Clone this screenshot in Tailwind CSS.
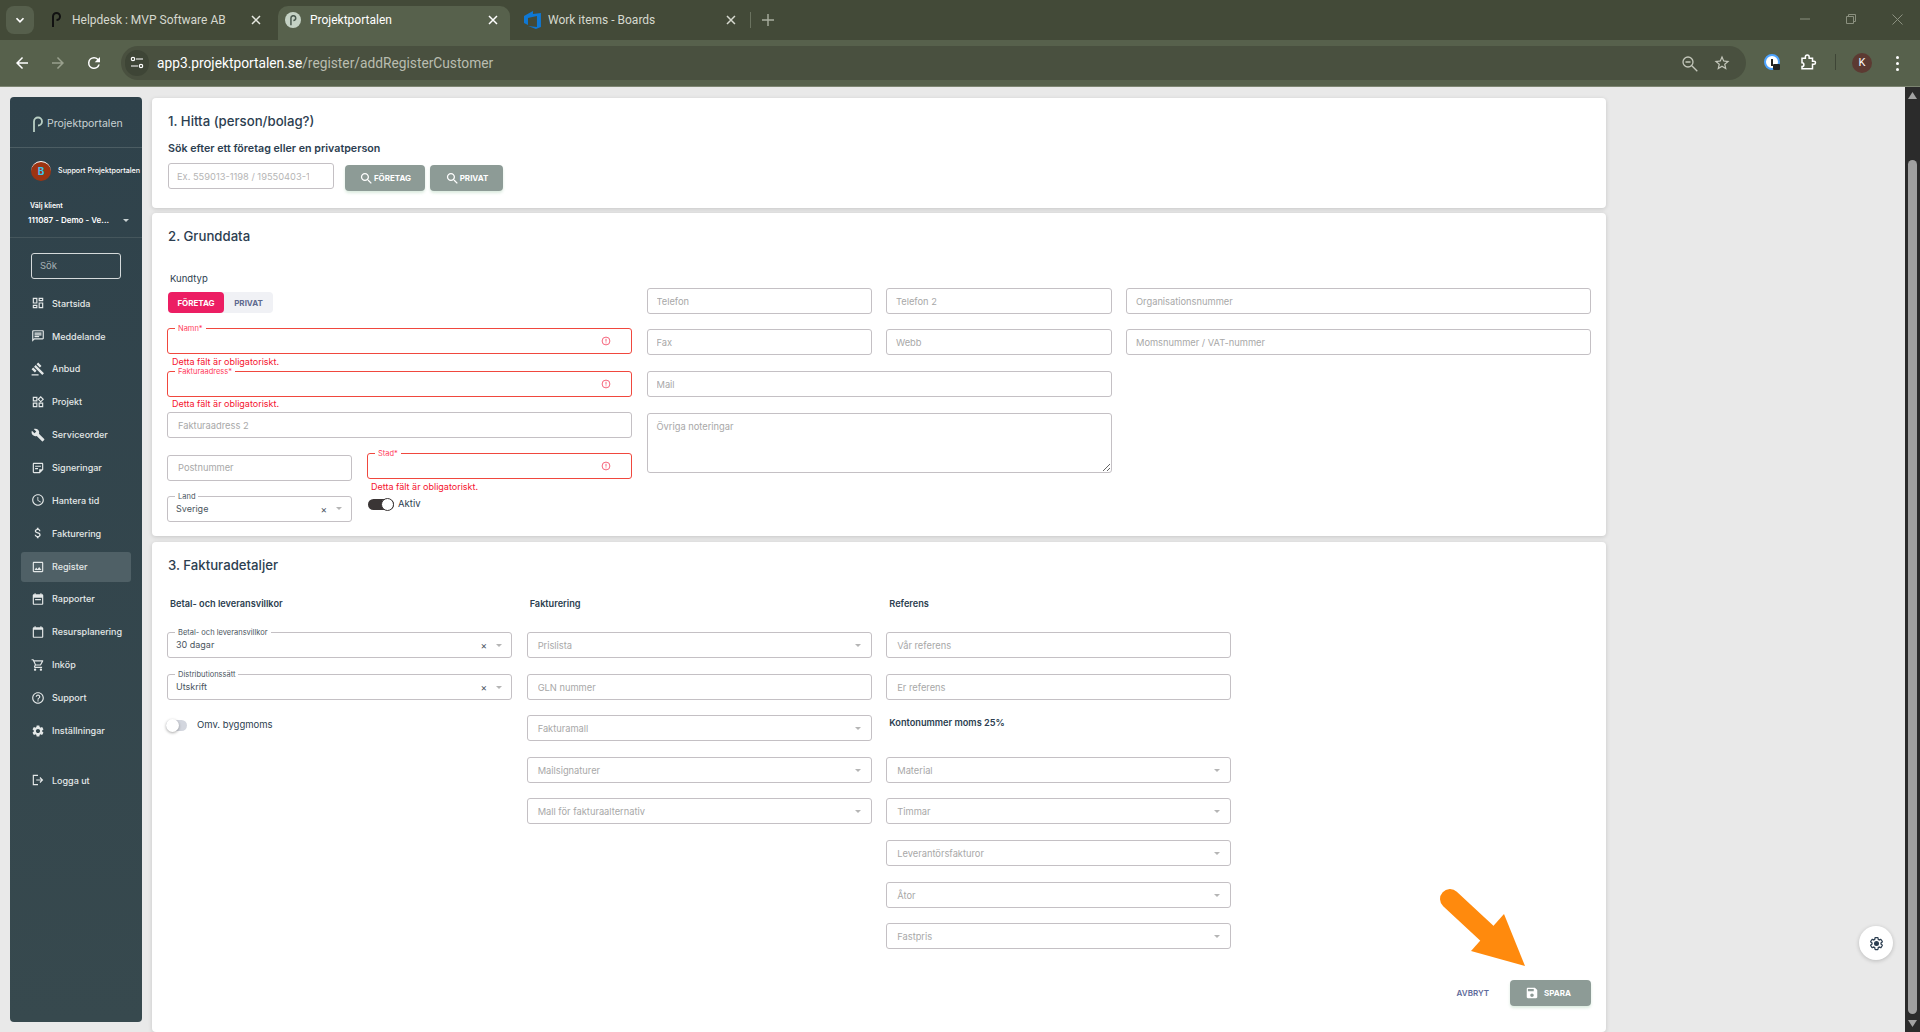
<!DOCTYPE html>
<html lang="sv">
<head>
<meta charset="UTF-8">
<title>Projektportalen</title>
<script src="https://cdn.jsdelivr.net/npm/@tailwindcss/browser@4"></script>
</head>
<body class="relative h-[1032px] overflow-hidden bg-[#e9e9e9] font-[Inter,sans-serif] text-[#2c3e50]">

<!-- Browser chrome -->
<header class="font-[Roboto,sans-serif]">
  <div class="flex h-10 items-end bg-[#434a38] text-[#d6d9cf]">
    <div class="mb-[6px] ml-[6px] flex h-[28px] w-[28px] items-center justify-center rounded-lg bg-[#565f4c]">
      <svg class="h-[14px] w-[14px]" viewBox="0 0 24 24" fill="none" stroke="#fff" stroke-width="3"><path d="M6 9l6 6 6-6"/></svg>
    </div>
    <div class="ml-[2px] flex h-[34px] w-[242px] items-center pb-[6px] pl-[15px]">
      <svg class="h-[16px] w-[10px]" viewBox="0 0 10 16" fill="none" stroke="#111" stroke-width="2"><path d="M2 15V4.500a3.500 3.500 0 1 1 3.500 3.500"/></svg>
      <span class="ml-[11px] w-[174px] whitespace-nowrap text-[12px]">Helpdesk : MVP Software AB</span>
      <svg class="ml-[5px] h-[10px] w-[10px]" viewBox="0 0 10 10" stroke="#e6e8e0" stroke-width="1.500"><path d="M1 1l8 8M9 1L1 9"/></svg>
    </div>
    <div class="flex h-[34px] w-[232px] items-center rounded-t-[10px] bg-[#57614c] pb-[6px] pl-[7px] text-white">
      <div class="flex h-4 w-4 items-center justify-center rounded-full bg-[#c5d2c5]">
        <svg class="h-[11px] w-[8px]" viewBox="0 0 10 16" fill="none" stroke="#4b5a50" stroke-width="2.200"><path d="M2 15V4.500a3.500 3.500 0 1 1 3.500 3.500"/></svg>
      </div>
      <span class="ml-[9px] w-[173px] text-[12px]">Projektportalen</span>
      <svg class="ml-[5px] h-[10px] w-[10px]" viewBox="0 0 10 10" stroke="#fff" stroke-width="1.500"><path d="M1 1l8 8M9 1L1 9"/></svg>
    </div>
    <div class="flex h-[34px] w-[241px] items-center pb-[6px] pl-[14px]">
      <svg class="h-[18px] w-[17px]" viewBox="0 0 17 18" fill="#0f78d4"><path d="M0 5l9-5 0 3 8-1v14l-5 2-8-3 9 1V5L4 7v7l-4-2z"/></svg>
      <span class="ml-[7px] w-[179px] text-[12px]">Work items - Boards</span>
      <svg class="h-[10px] w-[10px]" viewBox="0 0 10 10" stroke="#d6d9cf" stroke-width="1.500"><path d="M1 1l8 8M9 1L1 9"/></svg>
      <span class="ml-[14px] h-[16px] w-px bg-[#6b7360]"></span>
    </div>
    <svg class="mb-[14px] ml-[11px] h-3 w-3" viewBox="0 0 12 12" stroke="#a9ae9f" stroke-width="1.400"><path d="M6 0v12M0 6h12"/></svg>
    <div class="mb-[15px] ml-auto flex items-center gap-[36px] pr-[17px]">
      <svg class="h-[12px] w-[10px]" viewBox="0 0 10 12" stroke="#8b907f"><path d="M0 6h10"/></svg>
      <svg class="h-[10px] w-[10px]" viewBox="0 0 10 10" fill="none" stroke="#8b907f"><path d="M.5 2.500h7v7h-7zM2.500 2.500v-2h7v7h-2"/></svg>
      <svg class="h-[11px] w-[11px]" viewBox="0 0 11 11" stroke="#8b907f"><path d="M.5.500l10 10M10.500.500l-10 10"/></svg>
    </div>
  </div>
  <div class="flex h-[47px] items-start border-b border-[#7d8572] bg-[#57614c] pt-[6px]">
    <div class="flex h-[34px] w-[121px] items-center">
      <svg class="ml-[13px] h-[18px] w-[18px]" viewBox="0 0 24 24" fill="#fff"><path d="M20 11H7.830l5.590-5.590L12 4l-8 8 8 8 1.410-1.410L7.830 13H20z"/></svg>
      <svg class="ml-[18px] h-[18px] w-[18px]" viewBox="0 0 24 24" fill="#99a08d"><path d="M4 11h12.170l-5.590-5.590L12 4l8 8-8 8-1.410-1.410L16.170 13H4z"/></svg>
      <svg class="ml-[18px] h-[18px] w-[18px]" viewBox="0 0 24 24" fill="#fff"><path d="M17.650 6.350A7.960 7.960 0 0 0 12 4a8 8 0 1 0 7.730 10h-2.080A6 6 0 1 1 12 6c1.660 0 3.140.69 4.220 1.780L13 11h7V4z"/></svg>
    </div>
    <div class="flex h-[34px] w-[1625px] items-center rounded-full bg-[#49503f] pl-[4px]">
      <div class="flex h-[26px] w-[24px] items-center justify-center rounded-full bg-[#3e4536]">
        <svg class="h-[16px] w-[14px]" viewBox="0 0 14 16" fill="none" stroke="#fff" stroke-width="1.200"><circle cx="3" cy="4" r="1.700"/><path d="M6 4h7M1 11h7"/><circle cx="11" cy="11" r="1.700"/></svg>
      </div>
      <p class="ml-[8px] pt-px text-[13.750px] text-white">app3.projektportalen.se<span class="text-[#b9bdb0]">/register/addRegisterCustomer</span></p>
      <svg class="ml-auto h-[17px] w-[17px]" viewBox="0 0 17 17" fill="none" stroke="#c4c7bb" stroke-width="1.300"><circle cx="7" cy="7" r="5"/><path d="M4.500 7h5M10.800 10.800l5.500 5.500"/></svg>
      <svg class="ml-[15px] mr-[15px] h-[18px] w-[18px]" viewBox="0 0 24 24" fill="#c4c7bb"><path d="M22 9.240l-7.190-.620L12 2 9.190 8.630 2 9.240l5.460 4.730L5.820 21 12 17.270 18.180 21l-1.630-7.030L22 9.240zM12 15.400l-3.760 2.270 1-4.280-3.320-2.880 4.380-.38L12 6.100l1.710 4.040 4.380.38-3.320 2.880 1 4.280L12 15.400z"/></svg>
    </div>
    <div class="relative ml-[18px] mt-[8px] flex h-[16px] w-[16px] items-center justify-center rounded-full border-2 border-[#4da3ff] bg-white">
      <span class="h-[7px] w-[2px] bg-[#222]"></span>
      <span class="absolute -bottom-[2px] -right-[2px] h-[6px] w-[7px] rounded-[1px] bg-[#222]"></span>
    </div>
    <svg class="ml-[19px] mt-[7px] h-[18px] w-[18px]" viewBox="0 0 24 24" fill="none" stroke="#fff" stroke-width="2"><path d="M4 7h4.500V5a2.500 2.500 0 0 1 5 0v2H18v4h2a2 2 0 0 1 0 4h-2v6H4v-3a2.500 2.500 0 0 0 0-5V7z"/></svg>
    <span class="ml-[18px] mt-[8px] h-[16px] w-px bg-[#3e4536]"></span>
    <span class="ml-[16px] mt-[7px] flex h-5 w-5 items-center justify-center rounded-full bg-[#5c3a32] text-[11px] text-white">K</span>
    <span class="ml-[24px] mt-[10px] flex flex-col gap-[3px]">
      <i class="h-[3px] w-[3px] rounded-full bg-white"></i><i class="h-[3px] w-[3px] rounded-full bg-white"></i><i class="h-[3px] w-[3px] rounded-full bg-white"></i>
    </span>
  </div>
</header>

<div class="flex h-[945px]">
  <!-- Sidebar -->
  <aside class="ml-[10px] mt-[10px] h-[925px] w-[132px] shrink-0 overflow-hidden rounded-[4px] bg-gradient-to-b from-[#2f424b] to-[#37494e] text-[#e4e8e8]">
    <div class="flex h-[51px] items-center border-b border-[#4c5d63] pl-[22px] pt-[4px]">
      <svg class="h-[17px] w-[12px]" viewBox="0 0 12 16" fill="none" stroke="#b9cfc4" stroke-width="1.800"><path d="M2 15.500V5a4 4 0 1 1 4 4"/></svg>
      <span class="ml-[3px] text-[10.500px] text-[#c9d2d3]">Projektportalen</span>
    </div>
    <div class="flex h-[46px] items-center pl-[21px]">
      <span class="flex h-5 w-5 shrink-0 items-center justify-center rounded-full border-t border-t-white bg-[#9c3412] text-[10px] font-bold text-[#3bc4ee]">B</span>
      <span class="ml-[7px] whitespace-nowrap text-[7.200px] font-medium text-white">Support Projektportalen</span>
    </div>
    <div class="h-[44px] border-b border-[#45565c] pl-[18px] pt-[6px]">
      <p class="pl-[2px] text-[7px] font-semibold leading-[12px] text-white">Välj klient</p>
      <div class="mt-px flex items-center pr-[13px]">
        <span class="text-[8px] font-semibold leading-[14px] text-white">111087 - Demo - Ve...</span>
        <svg class="ml-auto h-[3px] w-[6px]" viewBox="0 0 6 3" fill="#c9d2d3"><path d="M0 0h6L3 3z"/></svg>
      </div>
    </div>
    <div class="ml-[21px] mt-[15px] flex h-[26px] w-[90px] items-center rounded-[3px] border border-[#d5dadb] pl-[8px] text-[9.500px] text-[#a7b1b4]">Sök</div>

    <nav class="mt-[8px] flex flex-col text-[9px] font-medium">
      <a class="flex h-[32.850px] items-center pl-[21px]"><svg class="mr-[7px] h-[14px] w-[14px] shrink-0" viewBox="0 0 24 24" fill="currentColor"><path d="M19 5v2h-4V5h4M9 5v6H5V5h4m10 8v6h-4v-6h4M9 17v2H5v-2h4M21 3h-8v6h8V3zM11 3H3v10h8V3zm10 8h-8v10h8V11zm-10 4H3v6h8v-6z"/></svg>Startsida</a>
      <a class="flex h-[32.850px] items-center pl-[21px]"><svg class="mr-[7px] h-[14px] w-[14px] shrink-0" viewBox="0 0 24 24" fill="currentColor"><path d="M20 2H4c-1.100 0-2 .9-2 2v18l4-4h14c1.100 0 2-.9 2-2V4c0-1.100-.9-2-2-2zm0 14H5.170L4 17.170V4h16v12zM6 12h8v2H6zm0-3h12v2H6zm0-3h12v2H6z"/></svg>Meddelande</a>
      <a class="flex h-[32.850px] items-center pl-[21px]"><svg class="mr-[7px] h-[14px] w-[14px] shrink-0" viewBox="0 0 24 24" fill="currentColor"><path d="M1 21h12v2H1zM5.245 8.070l2.830-2.827 14.140 14.142-2.828 2.828zM12.317 1l5.657 5.656-2.830 2.830-5.654-5.660zM3.825 9.485l5.657 5.657-2.828 2.828-5.657-5.657z"/></svg>Anbud</a>
      <a class="flex h-[32.850px] items-center pl-[21px]"><svg class="mr-[7px] h-[14px] w-[14px] shrink-0" viewBox="0 0 24 24" fill="currentColor"><path d="M16.660 4.520l2.830 2.830-2.830 2.830-2.830-2.830 2.830-2.830M9 5v4H5V5h4m10 10v4h-4v-4h4M9 15v4H5v-4h4m7.660-13.310L11 7.340 16.660 13l5.660-5.660-5.660-5.650zM11 3H3v8h8V3zm10 10h-8v8h8v-8zm-10 0H3v8h8v-8z"/></svg>Projekt</a>
      <a class="flex h-[32.850px] items-center pl-[21px]"><svg class="mr-[7px] h-[14px] w-[14px] shrink-0" viewBox="0 0 24 24" fill="currentColor"><path d="M22.700 19l-9.100-9.100c.9-2.300.4-5-1.500-6.900-2-2-5-2.400-7.400-1.300L9 6 6 9 1.600 4.700C.4 7.100.9 10.100 2.900 12.100c1.900 1.900 4.600 2.400 6.900 1.500l9.100 9.100c.4.400 1 .4 1.400 0l2.300-2.300c.5-.4.5-1.100.1-1.400z"/></svg>Serviceorder</a>
      <a class="flex h-[32.850px] items-center pl-[21px]"><svg class="mr-[7px] h-[14px] w-[14px] shrink-0" viewBox="0 0 24 24" fill="currentColor"><path d="M19 5v9h-5v5H5V5h14m0-2H5c-1.100 0-2 .9-2 2v14c0 1.100.9 2 2 2h10l6-6V5c0-1.100-.9-2-2-2zm-7 11H7v-2h5v2zm5-4H7V8h10v2z"/></svg>Signeringar</a>
      <a class="flex h-[32.850px] items-center pl-[21px]"><svg class="mr-[7px] h-[14px] w-[14px] shrink-0" viewBox="0 0 24 24" fill="currentColor"><path d="M11.990 2C6.470 2 2 6.480 2 12s4.470 10 9.990 10C17.520 22 22 17.520 22 12S17.520 2 11.990 2zM12 20c-4.420 0-8-3.580-8-8s3.580-8 8-8 8 3.580 8 8-3.580 8-8 8zm.5-13H11v6l5.250 3.150.75-1.230-4.500-2.670z"/></svg>Hantera tid</a>
      <a class="flex h-[32.850px] items-center pl-[21px]"><svg class="mr-[7px] h-[14px] w-[14px] shrink-0" viewBox="0 0 24 24" fill="currentColor"><path d="M11.800 10.900c-2.270-.59-3-1.200-3-2.150 0-1.090 1.010-1.850 2.700-1.850 1.780 0 2.440.85 2.500 2.100h2.210c-.07-1.720-1.120-3.300-3.210-3.810V3h-3v2.160c-1.940.42-3.500 1.680-3.500 3.610 0 2.310 1.910 3.460 4.700 4.130 2.500.6 3 1.480 3 2.410 0 .69-.49 1.790-2.700 1.790-2.060 0-2.870-.92-2.980-2.100h-2.200c.12 2.190 1.760 3.420 3.680 3.830V21h3v-2.150c1.950-.37 3.500-1.500 3.500-3.550 0-2.840-2.430-3.810-4.700-4.400z"/></svg>Fakturering</a>
      <a class="mx-[11px] mb-[1px] mt-[2px] flex h-[30px] items-center rounded-[3px] bg-[#4f6066] pl-[10px]"><svg class="mr-[7px] h-[14px] w-[14px] shrink-0" viewBox="0 0 24 24" fill="currentColor"><path d="M19 3H5c-1.100 0-2 .9-2 2v14c0 1.100.9 2 2 2h14c1.100 0 2-.9 2-2V5c0-1.100-.9-2-2-2zm0 16H5V5h14v14zm-5-7l-3 3.720L9 13l-3 4h12l-4-5z"/></svg>Register</a>
      <a class="flex h-[32.850px] items-center pl-[21px]"><svg class="mr-[7px] h-[14px] w-[14px] shrink-0" viewBox="0 0 24 24" fill="currentColor"><path d="M19 4h-1V2h-2v2H8V2H6v2H5c-1.100 0-2 .9-2 2v14c0 1.100.9 2 2 2h14c1.100 0 2-.9 2-2V6c0-1.100-.9-2-2-2zm0 16H5V10h14v10zM7 12h10v2H7z"/></svg>Rapporter</a>
      <a class="flex h-[32.850px] items-center pl-[21px]"><svg class="mr-[7px] h-[14px] w-[14px] shrink-0" viewBox="0 0 24 24" fill="currentColor"><path d="M19 4h-1V2h-2v2H8V2H6v2H5c-1.100 0-2 .9-2 2v14c0 1.100.9 2 2 2h14c1.100 0 2-.9 2-2V6c0-1.100-.9-2-2-2zm0 16H5V8h14v12z"/></svg>Resursplanering</a>
      <a class="flex h-[32.850px] items-center pl-[21px]"><svg class="mr-[7px] h-[14px] w-[14px] shrink-0" viewBox="0 0 24 24" fill="currentColor"><path d="M15.550 13c.75 0 1.410-.41 1.750-1.030l3.580-6.490A.996.996 0 0020.010 4H5.210l-.94-2H1v2h2l3.600 7.590-1.350 2.440C4.520 15.370 5.480 17 7 17h12v-2H7l1.100-2h7.450zM6.160 6h12.150l-2.760 5H8.530L6.160 6zM7 18c-1.100 0-1.990.9-1.990 2S5.900 22 7 22s2-.9 2-2-.9-2-2-2zm10 0c-1.100 0-1.990.9-1.990 2s.89 2 1.990 2 2-.9 2-2-.9-2-2-2z"/></svg>Inköp</a>
      <a class="flex h-[32.850px] items-center pl-[21px]"><svg class="mr-[7px] h-[14px] w-[14px] shrink-0" viewBox="0 0 24 24" fill="currentColor"><path d="M11 18h2v-2h-2v2zm1-16C6.480 2 2 6.480 2 12s4.480 10 10 10 10-4.480 10-10S17.520 2 12 2zm0 18c-4.410 0-8-3.590-8-8s3.590-8 8-8 8 3.590 8 8-3.590 8-8 8zm0-14c-2.210 0-4 1.790-4 4h2c0-1.100.9-2 2-2s2 .9 2 2c0 2-3 1.750-3 5h2c0-2.250 3-2.500 3-5 0-2.210-1.790-4-4-4z"/></svg>Support</a>
      <a class="flex h-[32.850px] items-center pl-[21px]"><svg class="mr-[7px] h-[14px] w-[14px] shrink-0" viewBox="0 0 24 24" fill="currentColor"><path d="M19.140 12.940c.04-.3.06-.61.06-.94 0-.32-.02-.64-.07-.94l2.030-1.580c.18-.14.23-.41.12-.61l-1.920-3.320c-.12-.22-.37-.29-.59-.22l-2.390.96c-.5-.38-1.030-.7-1.620-.94l-.36-2.540c-.04-.24-.24-.41-.48-.41h-3.840c-.24 0-.43.17-.47.41l-.36 2.540c-.59.24-1.130.57-1.620.94l-2.390-.96c-.22-.08-.47 0-.59.22L2.740 8.870c-.12.21-.08.47.12.61l2.030 1.580c-.05.3-.09.63-.09.94s.02.64.07.94l-2.030 1.580c-.18.14-.23.41-.12.61l1.920 3.320c.12.22.37.29.59.22l2.390-.96c.5.38 1.030.7 1.620.94l.36 2.540c.05.24.24.41.48.41h3.840c.24 0 .44-.17.47-.41l.36-2.540c.59-.24 1.130-.56 1.620-.94l2.390.96c.22.08.47 0 .59-.22l1.920-3.320c.12-.22.07-.47-.12-.61l-2.010-1.580zM12 15.600c-1.980 0-3.600-1.620-3.600-3.600s1.620-3.600 3.600-3.600 3.600 1.620 3.600 3.600-1.620 3.600-3.600 3.600z"/></svg>Inställningar</a>
      <a class="mt-[17px] flex h-[32.850px] items-center pl-[21px]"><svg class="mr-[7px] h-[14px] w-[14px] shrink-0" viewBox="0 0 24 24" fill="currentColor"><path d="M3 3h9v2H5v14h7v2H3zM16 7l5 5-5 5-1.400-1.400 2.600-2.600H9v-2h8.200l-2.600-2.600z"/></svg>Logga ut</a>
    </nav>
  </aside>

  <!-- Main column -->
  <main class="ml-[10px] mt-[11px] flex w-[1454px] shrink-0 flex-col gap-[5px]">
    <!-- 1. Hitta -->
    <section class="h-[110px] shrink-0 rounded-[4px] bg-white px-[15px] shadow-[0_1px_4px_rgba(0,0,0,0.15)]">
      <h2 class="flex h-[48px] items-center pl-px text-[13.200px] font-medium">1. Hitta (person/bolag?)</h2>
      <p class="flex h-[7px] items-center pl-px text-[10.700px] font-semibold">Sök efter ett företag eller en privatperson</p>
      <div class="mt-[10px] flex items-start pl-px">
        <input class="h-[26px] w-[166px] rounded-[3px] border border-[#c4c0c4] pl-[8px] pr-[24px] text-[9.300px] outline-none placeholder:text-[#b5b5b5]" placeholder="Ex. 559013-1198 / 19550403-1234">
        <button class="ml-[11px] mt-[2px] flex h-[26px] w-[80px] items-center justify-center rounded-[4px] bg-[#8d9b96] text-[8px] font-bold text-white shadow-[0_2px_3px_rgba(80,160,100,0.2)]"><svg class="h-[15px] w-[15px]" viewBox="0 0 24 24" fill="#fff"><path d="M15.500 14h-.79l-.28-.27C15.410 12.590 16 11.110 16 9.500 16 5.910 13.090 3 9.500 3S3 5.910 3 9.500 5.910 16 9.500 16c1.610 0 3.090-.59 4.230-1.570l.27.28v.79l5 4.990L20.490 19l-4.990-5zm-6 0C7.010 14 5 11.990 5 9.500S7.010 5 9.500 5 14 7.010 14 9.500 11.990 14 9.500 14z"/></svg>FÖRETAG</button>
        <button class="ml-[5px] mt-[2px] flex h-[26px] w-[73px] items-center justify-center rounded-[4px] bg-[#8d9b96] text-[8px] font-bold text-white shadow-[0_2px_3px_rgba(80,160,100,0.2)]"><svg class="h-[15px] w-[15px]" viewBox="0 0 24 24" fill="#fff"><path d="M15.500 14h-.79l-.28-.27C15.410 12.590 16 11.110 16 9.500 16 5.910 13.090 3 9.500 3S3 5.910 3 9.500 5.910 16 9.500 16c1.610 0 3.090-.59 4.230-1.570l.27.28v.79l5 4.990L20.490 19l-4.990-5zm-6 0C7.010 14 5 11.990 5 9.500S7.010 5 9.500 5 14 7.010 14 9.500 11.990 14 9.500 14z"/></svg>PRIVAT</button>
      </div>
    </section>

    <!-- 2. Grunddata -->
    <section class="h-[323px] shrink-0 rounded-[4px] bg-white px-[15px] shadow-[0_1px_4px_rgba(0,0,0,0.15)]">
      <h2 class="flex h-[48px] items-center pl-px text-[13.200px] font-medium">2. Grunddata</h2>
      <div class="grid grid-cols-3 gap-x-[14.500px]">
        <div class="flex flex-col">
          <p class="mt-[10px] h-[16px] pl-[3px] text-[9.500px] leading-[16px]">Kundtyp</p>
          <div class="ml-px mt-[5px] flex h-[21px] w-[105px] self-start rounded-[4px] bg-[#f0f1f5] text-[8px] font-bold">
            <span class="flex w-[56px] items-center justify-center rounded-[4px] bg-[#ec1e63] text-white">FÖRETAG</span>
            <span class="flex flex-1 items-center justify-center text-[#5e6a8e]">PRIVAT</span>
          </div>
          <div class="relative mt-[15px] flex h-[26px] items-center justify-end rounded-[3px] border border-[#f0483e] pr-[20px]">
            <span class="absolute -top-[5px] left-[7px] bg-white px-[3px] text-[7.500px] leading-[9px] text-[#ff3b5c]">Namn*</span>
            <svg class="h-[10px] w-[10px]" viewBox="0 0 10 10" fill="none" stroke="#f6657c"><circle cx="5" cy="5" r="3.900"/><path d="M5 2.800v2.800M5 6.500v.8"/></svg>
          </div>
          <p class="h-[17px] pl-[5px] text-[9px] leading-[15px] text-[#f5142f]">Detta fält är obligatoriskt.</p>
          <div class="relative flex h-[26px] items-center justify-end rounded-[3px] border border-[#f0483e] pr-[20px]">
            <span class="absolute -top-[5px] left-[7px] bg-white px-[3px] text-[7.500px] leading-[9px] text-[#ff3b5c]">Fakturaadress*</span>
            <svg class="h-[10px] w-[10px]" viewBox="0 0 10 10" fill="none" stroke="#f6657c"><circle cx="5" cy="5" r="3.900"/><path d="M5 2.800v2.800M5 6.500v.8"/></svg>
          </div>
          <p class="h-[15px] pl-[5px] text-[9px] leading-[13px] text-[#f5142f]">Detta fält är obligatoriskt.</p>
          <input class="h-[26px] rounded-[3px] border border-[#c4c0c4] px-[10px] text-[9.300px] outline-none placeholder:text-[#a8a8a8]" placeholder="Fakturaadress 2">
          <div class="mt-[15px] flex gap-[15px]">
            <div class="w-[185px] shrink-0">
              <input class="h-[26px] w-full rounded-[3px] border border-[#c4c0c4] px-[10px] text-[9.300px] outline-none placeholder:text-[#a8a8a8]" placeholder="Postnummer">
              <div class="relative mt-[15px] flex h-[26px] items-center rounded-[3px] border border-[#c4c0c4] pl-[8px] pr-[9px] text-[9px] text-[#4a5560]">
                <span class="absolute -top-[5px] left-[7px] bg-white px-[3px] text-[7.500px] leading-[9px]">Land</span>
                Sverige
                <span class="ml-auto text-[10px] leading-none">×</span>
                <svg class="ml-[9px] h-[3px] w-[6px]" viewBox="0 0 6 3" fill="#b5b5b5"><path d="M0 0h6L3 3z"/></svg>
              </div>
            </div>
            <div class="flex-1">
              <div class="relative flex h-[26px] items-center justify-end rounded-[3px] border border-[#f0483e] pr-[20px]">
                <span class="absolute -top-[5px] left-[7px] bg-white px-[3px] text-[7.500px] leading-[9px] text-[#ff3b5c]">Stad*</span>
                <svg class="h-[10px] w-[10px]" viewBox="0 0 10 10" fill="none" stroke="#f6657c"><circle cx="5" cy="5" r="3.900"/><path d="M5 2.800v2.800M5 6.500v.8"/></svg>
              </div>
              <p class="h-[16px] pl-[4px] text-[9px] leading-[16px] text-[#f5142f]">Detta fält är obligatoriskt.</p>
              <div class="mt-[4px] flex items-start">
                <span class="relative ml-px h-[11px] w-[26px] rounded-full bg-[#3a3535]"><i class="absolute -top-px right-0 h-[13px] w-[13px] rounded-full border border-[#3a3535] bg-white"></i></span>
                <span class="ml-[4px] text-[9.500px] leading-[10px]">Aktiv</span>
              </div>
            </div>
          </div>
        </div>
        <div class="pt-[27px]">
          <div class="grid grid-cols-2 gap-x-[14px] gap-y-[15px]">
            <input class="h-[26px] w-full rounded-[3px] border border-[#c4c0c4] px-[9px] text-[9.300px] outline-none placeholder:text-[#a8a8a8]" placeholder="Telefon">
            <input class="h-[26px] w-full rounded-[3px] border border-[#c4c0c4] px-[9px] text-[9.300px] outline-none placeholder:text-[#a8a8a8]" placeholder="Telefon 2">
            <input class="h-[26px] w-full rounded-[3px] border border-[#c4c0c4] px-[9px] text-[9.300px] outline-none placeholder:text-[#a8a8a8]" placeholder="Fax">
            <input class="h-[26px] w-full rounded-[3px] border border-[#c4c0c4] px-[9px] text-[9.300px] outline-none placeholder:text-[#a8a8a8]" placeholder="Webb">
          </div>
          <input class="mt-[16px] block h-[26px] w-full rounded-[3px] border border-[#c4c0c4] px-[9px] text-[9.300px] outline-none placeholder:text-[#a8a8a8]" placeholder="Mail">
          <textarea class="mt-[16px] block h-[60px] w-full rounded-[3px] border border-[#c4c0c4] px-[9px] py-[6px] text-[9.300px] outline-none placeholder:text-[#a8a8a8]" placeholder="Övriga noteringar"></textarea>
        </div>
        <div class="flex flex-col gap-y-[15px] pt-[27px]">
          <input class="h-[26px] w-full rounded-[3px] border border-[#c4c0c4] px-[9px] text-[9.300px] outline-none placeholder:text-[#a8a8a8]" placeholder="Organisationsnummer">
          <input class="h-[26px] w-full rounded-[3px] border border-[#c4c0c4] px-[9px] text-[9.300px] outline-none placeholder:text-[#a8a8a8]" placeholder="Momsnummer / VAT-nummer">
        </div>
      </div>
    </section>

    <!-- 3. Fakturadetaljer -->
    <section class="mt-px h-[490px] shrink-0 rounded-[4px] bg-white px-[15px] shadow-[0_1px_4px_rgba(0,0,0,0.15)]">
      <h2 class="flex h-[48px] items-center pl-px text-[13.200px] font-medium">3. Fakturadetaljer</h2>
      <div class="grid grid-cols-4 gap-x-[14.500px]">
        <div>
          <p class="h-[28px] pl-[3px] text-[9.200px] font-semibold leading-[28px]">Betal- och leveransvillkor</p>
          <div class="relative mt-[14px] flex h-[26px] items-center rounded-[3px] border border-[#c4c0c4] pl-[8px] pr-[9px] text-[9px] text-[#4a5560]">
            <span class="absolute -top-[5px] left-[7px] bg-white px-[3px] text-[7.500px] leading-[9px]">Betal- och leveransvillkor</span>
            30 dagar
            <span class="ml-auto text-[10px] leading-none">×</span>
            <svg class="ml-[9px] h-[3px] w-[6px]" viewBox="0 0 6 3" fill="#b5b5b5"><path d="M0 0h6L3 3z"/></svg>
          </div>
          <div class="relative mt-[16px] flex h-[26px] items-center rounded-[3px] border border-[#c4c0c4] pl-[8px] pr-[9px] text-[9px] text-[#4a5560]">
            <span class="absolute -top-[5px] left-[7px] bg-white px-[3px] text-[7.500px] leading-[9px]">Distributionssätt</span>
            Utskrift
            <span class="ml-auto text-[10px] leading-none">×</span>
            <svg class="ml-[9px] h-[3px] w-[6px]" viewBox="0 0 6 3" fill="#b5b5b5"><path d="M0 0h6L3 3z"/></svg>
          </div>
          <div class="-ml-px mt-[18px] flex items-center">
            <span class="relative h-[11px] w-[21px] rounded-full bg-[#d3d6de]"><i class="absolute left-0 -top-px h-[13px] w-[13px] rounded-full bg-white shadow-[0_1px_3px_rgba(0,0,0,0.35)]"></i></span>
            <span class="ml-[10px] text-[9.500px]">Omv. byggmoms</span>
          </div>
        </div>
        <div>
          <p class="h-[28px] pl-[3px] text-[9.200px] font-semibold leading-[28px]">Fakturering</p>
          <div class="mt-[14px] flex h-[26px] items-center rounded-[3px] border border-[#c4c0c4] px-[10px] pt-px text-[9.300px] text-[#a8a8a8]">Prislista<svg class="ml-auto h-[3px] w-[6px]" viewBox="0 0 6 3" fill="#b5b5b5"><path d="M0 0h6L3 3z"/></svg></div>
          <input class="mt-[16px] block h-[26px] w-full rounded-[3px] border border-[#c4c0c4] px-[10px] text-[9.300px] outline-none placeholder:text-[#a8a8a8]" placeholder="GLN nummer">
          <div class="mt-[15px] flex h-[26px] items-center rounded-[3px] border border-[#c4c0c4] px-[10px] pt-px text-[9.300px] text-[#a8a8a8]">Fakturamall<svg class="ml-auto h-[3px] w-[6px]" viewBox="0 0 6 3" fill="#b5b5b5"><path d="M0 0h6L3 3z"/></svg></div>
          <div class="mt-[16px] flex h-[26px] items-center rounded-[3px] border border-[#c4c0c4] px-[10px] pt-px text-[9.300px] text-[#a8a8a8]">Mailsignaturer<svg class="ml-auto h-[3px] w-[6px]" viewBox="0 0 6 3" fill="#b5b5b5"><path d="M0 0h6L3 3z"/></svg></div>
          <div class="mt-[15px] flex h-[26px] items-center rounded-[3px] border border-[#c4c0c4] px-[10px] pt-px text-[9.300px] text-[#a8a8a8]">Mall för fakturaalternativ<svg class="ml-auto h-[3px] w-[6px]" viewBox="0 0 6 3" fill="#b5b5b5"><path d="M0 0h6L3 3z"/></svg></div>
        </div>
        <div>
          <p class="h-[28px] pl-[3px] text-[9.200px] font-semibold leading-[28px]">Referens</p>
          <input class="mt-[14px] block h-[26px] w-full rounded-[3px] border border-[#c4c0c4] px-[10px] text-[9.300px] outline-none placeholder:text-[#a8a8a8]" placeholder="Vår referens">
          <input class="mt-[16px] block h-[26px] w-full rounded-[3px] border border-[#c4c0c4] px-[10px] text-[9.300px] outline-none placeholder:text-[#a8a8a8]" placeholder="Er referens">
          <p class="mt-[15px] h-[16px] pl-[3px] text-[9.200px] font-semibold leading-[16px]">Kontonummer moms 25%</p>
          <div class="mt-[26px] flex h-[26px] items-center rounded-[3px] border border-[#c4c0c4] px-[10px] pt-px text-[9.300px] text-[#a8a8a8]">Material<svg class="ml-auto h-[3px] w-[6px]" viewBox="0 0 6 3" fill="#b5b5b5"><path d="M0 0h6L3 3z"/></svg></div>
          <div class="mt-[15px] flex h-[26px] items-center rounded-[3px] border border-[#c4c0c4] px-[10px] pt-px text-[9.300px] text-[#a8a8a8]">Timmar<svg class="ml-auto h-[3px] w-[6px]" viewBox="0 0 6 3" fill="#b5b5b5"><path d="M0 0h6L3 3z"/></svg></div>
          <div class="mt-[16px] flex h-[26px] items-center rounded-[3px] border border-[#c4c0c4] px-[10px] pt-px text-[9.300px] text-[#a8a8a8]">Leverantörsfakturor<svg class="ml-auto h-[3px] w-[6px]" viewBox="0 0 6 3" fill="#b5b5b5"><path d="M0 0h6L3 3z"/></svg></div>
          <div class="mt-[16px] flex h-[26px] items-center rounded-[3px] border border-[#c4c0c4] px-[10px] pt-px text-[9.300px] text-[#a8a8a8]">Åtor<svg class="ml-auto h-[3px] w-[6px]" viewBox="0 0 6 3" fill="#b5b5b5"><path d="M0 0h6L3 3z"/></svg></div>
          <div class="mt-[15px] flex h-[26px] items-center rounded-[3px] border border-[#c4c0c4] px-[10px] pt-px text-[9.300px] text-[#a8a8a8]">Fastpris<svg class="ml-auto h-[3px] w-[6px]" viewBox="0 0 6 3" fill="#b5b5b5"><path d="M0 0h6L3 3z"/></svg></div>
        </div>
      </div>
      <div class="mt-[31px] flex items-center justify-end">
        <span class="text-[8px] font-semibold text-[#5e6a9a]">AVBRYT</span>
        <button class="ml-[21px] flex h-[26px] w-[81px] items-center justify-center rounded-[4px] bg-[#8d9b96] pr-[5px] text-[8px] font-bold text-white shadow-[0_2px_3px_rgba(80,160,100,0.2)]"><svg class="mr-[5px] h-[14px] w-[14px]" viewBox="0 0 24 24" fill="#fff"><path d="M17 3H5c-1.110 0-2 .9-2 2v14c0 1.100.89 2 2 2h14c1.100 0 2-.9 2-2V7l-4-4zm-5 16c-1.660 0-3-1.340-3-3s1.340-3 3-3 3 1.340 3 3-1.340 3-3 3zm3-10H5V5h10v4z"/></svg>SPARA</button>
      </div>
    </section>
  </main>

  <!-- Scrollbar -->
  <div class="ml-auto flex w-[15px] flex-col items-center bg-[#2b2b2b]">
    <svg class="mt-[5px] h-[7px] w-[9px]" viewBox="0 0 9 7" fill="#a3a3a3"><path d="M0 7L4.500 0 9 7z"/></svg>
    <div class="mt-[61px] h-[854px] w-[9px] rounded-full bg-[#a0a0a0]"></div>
    <svg class="mt-[6px] h-[7px] w-[9px]" viewBox="0 0 9 7" fill="#a3a3a3"><path d="M0 0l4.500 7L9 0z"/></svg>
  </div>
</div>

<!-- Floating settings button -->
<div class="absolute left-[1859px] top-[926px] flex h-[34px] w-[34px] items-center justify-center rounded-full bg-white shadow-[0_1px_4px_rgba(0,0,0,0.2)]">
  <svg class="h-[15px] w-[15px]" viewBox="0 0 24 24" fill="none" stroke="#2c3e50" stroke-width="2"><path d="M19.140 12.940c.04-.3.06-.61.06-.94 0-.32-.02-.64-.07-.94l2.030-1.580c.18-.14.23-.41.12-.61l-1.920-3.320c-.12-.22-.37-.29-.59-.22l-2.390.96c-.5-.38-1.030-.7-1.620-.94l-.36-2.540c-.04-.24-.24-.41-.48-.41h-3.840c-.24 0-.43.17-.47.41l-.36 2.540c-.59.24-1.130.57-1.620.94l-2.390-.96c-.22-.08-.47 0-.59.22L2.740 8.870c-.12.21-.08.47.12.61l2.030 1.580c-.05.3-.09.63-.09.94s.02.64.07.94l-2.030 1.580c-.18.14-.23.41-.12.61l1.920 3.320c.12.22.37.29.59.22l2.390-.96c.5.38 1.030.7 1.620.94l.36 2.540c.05.24.24.41.48.41h3.840c.24 0 .44-.17.47-.41l.36-2.540c.59-.24 1.130-.56 1.620-.94l2.390.96c.22.08.47 0 .59-.22l1.920-3.320c.12-.22.07-.47-.12-.61l-2.010-1.580z"/><circle cx="12" cy="12" r="3" fill="#2c3e50"/></svg>
</div>

<!-- Orange annotation arrow -->
<svg class="pointer-events-none absolute left-[1430px] top-[880px] h-[100px] w-[110px]" viewBox="0 0 110 100">
  <path d="M20 19L62 58" stroke="#ff8a0d" stroke-width="20" stroke-linecap="round"/>
  <path d="M74 34L95 86 41 71z" fill="#ff8a0d"/>
</svg>

</body>
</html>
